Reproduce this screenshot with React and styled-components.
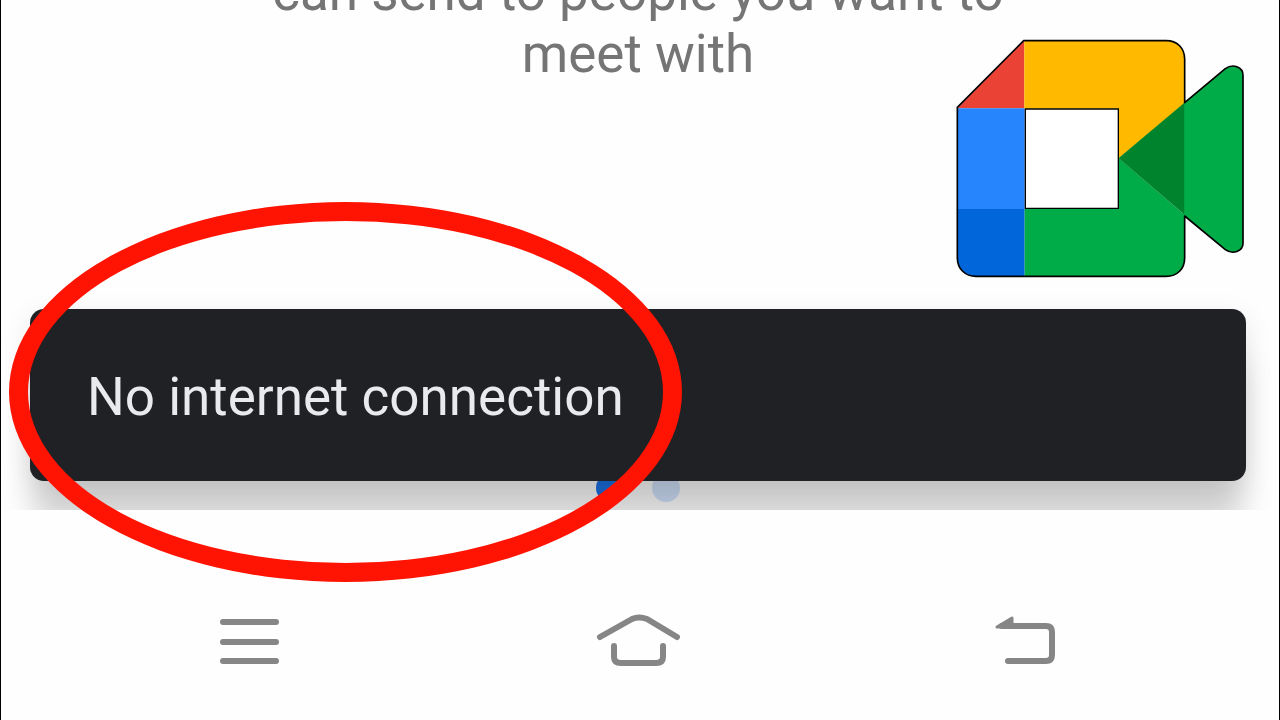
import React from 'react';
import styled, { createGlobalStyle } from 'styled-components';

const GlobalStyle = createGlobalStyle`
  * {
    box-sizing: border-box;
  }

  body {
    margin: 0;
    background: #fefefe;
    font-family: Roboto, 'Liberation Sans', sans-serif;
  }
`;

const Screen = styled.div`
  position: relative;
  display: flex;
  flex-direction: column;
  min-height: 100vh;
  overflow: hidden;
  border: solid #000;
  border-width: 0 1px;
`;

const Main = styled.main`
  position: relative;
  flex: 1;
  display: flex;
  flex-direction: column;
  justify-content: space-between;
  overflow: hidden;
`;

// The intro is scrolled, so only its last lines stay in view
const Intro = styled.div`
  display: flex;
  flex-direction: column;
  justify-content: flex-end;
  align-items: center;
  height: 85px;
  overflow: hidden;
`;

const IntroText = styled.p`
  width: 780px;
  max-width: 100%;
  margin: 0;
  padding-right: 4px;
  color: #757575;
  font-size: 53px;
  line-height: 62px;
  text-align: center;
`;

const Pager = styled.div`
  display: flex;
  justify-content: center;
  gap: 28px;
  padding: 0 4px 8px 0;
`;

const Dot = styled.span`
  width: 28px;
  height: 28px;
  border-radius: 50%;
  background: ${({ $active }) => ($active ? '#1a73e8' : '#d2e3fc')};
`;

const Snackbar = styled.div`
  position: absolute;
  right: 33px;
  bottom: 29px;
  left: 29px;
  display: flex;
  align-items: center;
  padding: 56px 57px 52px;
  border-radius: 14px;
  background: #202124;
  box-shadow: 0 48px 32px -4px rgba(0, 0, 0, 0.17), 0 8px 28px rgba(0, 0, 0, 0.1);
  color: #e8eaed;
  font-size: 53px;
  line-height: 64px;
`;

const NavBar = styled.nav`
  display: flex;
  justify-content: space-between;
  height: 210px;
  padding: 90px 192px 40px 190px;
  background: #fefefe;
`;

const NavButton = styled.button`
  padding: 0;
  border: 0;
  background: none;
  cursor: pointer;

  svg {
    display: block;
    width: 120px;
    height: 80px;
    fill: none;
    stroke: #868686;
    stroke-width: 6;
    stroke-linecap: round;
    stroke-linejoin: round;
  }
`;

const Highlight = styled.div`
  position: absolute;
  top: 202px;
  left: 8px;
  width: 673px;
  height: 380px;
  border: 19px solid #ff1403;
  border-radius: 50%;
  pointer-events: none;
`;

const Logo = styled.svg`
  position: absolute;
  top: 20px;
  right: 19px;
  width: 320px;
  height: 270px;
`;

const MeetLogo = () => (
  <Logo viewBox="0 0 960 810" role="img" aria-label="Google Meet">
    <path d="M253 62V265H52Z" fill="#ea4335" />
    <path d="M52 265H254V567H52Z" fill="#2684fc" />
    <path d="M52 567H254V769H108Q52 765 52 713Z" fill="#0066da" />
    <path d="M253 62H678Q734 66 734 122V252L536 415V266H253Z" fill="#ffba00" />
    <path d="M254 567H536V415L734 585V713Q730 769 678 769H254Z" fill="#00ac47" />
    <path d="M731 250L856 146Q876 134 894 142Q909 150 909 166V670Q908 688 894 694Q876 701 856 689L731 585Z" fill="#00ac47" />
    <path d="M536 415L732 250V583Z" fill="#00832d" stroke="#00832d" />
    <path d="M256 267H535V565H256Z" fill="#fff" stroke="#000" strokeWidth="4" />
    <path
      d="M734 248V118C734 84 712 62 678 62H251L52 262V713C52 747 76 769 108 769H678C712 769 734 747 734 713V588L856 689C878 705 909 694 909 670V166C909 140 878 130 856 146Z"
      fill="none"
      stroke="#000"
      strokeWidth="5"
      strokeLinejoin="round"
    />
  </Logo>
);

const App = () => (
  <>
    <GlobalStyle />
    <Screen>
      <Main>
        <Intro>
          <IntroText>can send to people you want to meet with</IntroText>
        </Intro>
        <Pager>
          <Dot $active />
          <Dot />
        </Pager>
        <Snackbar role="status">No internet connection</Snackbar>
      </Main>
      <NavBar>
        <NavButton type="button" aria-label="Recent apps">
          <svg viewBox="0 0 120 80">
            <path d="M32 22H85M32 42H85M32 61H85" />
          </svg>
        </NavButton>
        <NavButton type="button" aria-label="Home">
          <svg viewBox="0 0 120 80">
            <path d="M21 37L53 19Q60 16 68 19L98 37" />
            <path d="M35 46V57Q35 63 42 63H77Q84 63 84 57V46" />
          </svg>
        </NavButton>
        <NavButton type="button" aria-label="Back">
          <svg viewBox="0 0 120 80">
            <path d="M41 61H79Q85 61 85 55V32Q85 26 79 26H35" />
            <path d="M30 27L45 18V27Z" fill="#868686" strokeWidth="3" />
          </svg>
        </NavButton>
      </NavBar>
      <Highlight />
      <MeetLogo />
    </Screen>
  </>
);

export default App;
